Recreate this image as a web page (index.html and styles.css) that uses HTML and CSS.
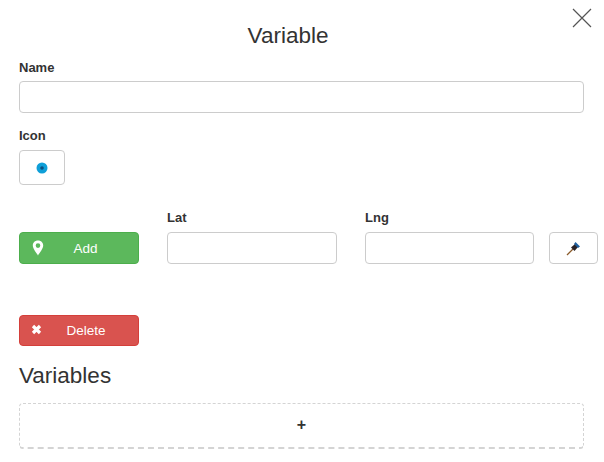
FILE: index.html
```html
<!DOCTYPE html>
<html lang="en">
<head>
    <meta charset="UTF-8">
    <title>Variable</title>
    <link rel="stylesheet" href="styles.css">
</head>
<body>
    <div class="modal">
        <button class="close" aria-label="Close">
            <svg width="20" height="20" viewBox="0 0 20 20"><path d="M1 1L19 19M19 1L1 19" stroke="#555" stroke-width="1.2" fill="none"/></svg>
        </button>
        <h1>Variable</h1>
        <label>Name</label>
        <input type="text" class="input name-input">
        <label class="icon-label">Icon</label>
        <button class="btn icon-btn">
            <svg width="12" height="12" viewBox="0 0 12 12"><circle cx="6" cy="6" r="5.5" fill="#0f9fd8"/><circle cx="6" cy="6" r="1.800" fill="#0b4f80"/></svg>
        </button>
        <div class="coords">
            <button class="btn action add">
                <svg class="action-icon" width="12" height="16" viewBox="0 0 12 16"><path fill-rule="evenodd" d="M6 .5C2.8.5.8 2.8.8 5.6.8 8.8 4.4 12.800 6 15.500 7.600 12.800 11.200 8.800 11.200 5.600 11.200 2.800 9.200.5 6 .5ZM6 3.300A2.300 2.300 0 1 1 6 7.900 2.300 2.300 0 0 1 6 3.300Z" fill="#fff"/></svg>
                <span>Add</span>
            </button>
            <div class="field lat">
                <label>Lat</label>
                <input type="text" class="input">
            </div>
            <div class="field lng">
                <label>Lng</label>
                <input type="text" class="input">
            </div>
            <button class="btn pin-btn">
                <svg width="16" height="16" viewBox="0 0 16 16">
                    <path d="M1 15L7 9" stroke="#8a5a2a" stroke-width="1.200"/>
                    <path d="M5 7.500L9 4L12 7L8.500 11Z" fill="#2b2226"/>
                    <path d="M9.500 2L14 6.500L12 8L8 4Z" fill="#1f5f9e"/>
                </svg>
            </button>
        </div>
        <button class="btn action delete">
            <svg class="action-icon" width="11" height="11" viewBox="0 0 11 11"><path d="M2 2L9 9M9 2L2 9" stroke="#fff" stroke-width="3.200" fill="none"/></svg>
            <span>Delete</span>
        </button>
        <h2>Variables</h2>
        <div class="add-box">+</div>
    </div>
</body>
</html>
```

FILE: styles.css
```css
body {
    font-family: "Liberation Sans", Arial, sans-serif;
    margin: 0;
    padding: 0;
    background-color: #fff;
    color: #333;
    font-size: 13px;
}
.modal {
    position: relative;
    padding: 23px 20px 0 19px;
}
.close {
    position: absolute;
    top: 8px;
    right: 12px;
    padding: 0;
    border: none;
    background: none;
    line-height: 0;
}
h1 {
    margin: 0 0 11px;
    padding-right: 27px;
    font-size: 22.5px;
    font-weight: 400;
    line-height: 26px;
    text-align: center;
}
h2 {
    margin: 16px 0 13px;
    font-size: 22.5px;
    font-weight: 400;
    line-height: 28px;
}
label {
    display: block;
    margin-bottom: 6px;
    font-weight: 700;
    line-height: 15px;
}
.input {
    display: block;
    box-sizing: border-box;
    width: 100%;
    height: 32px;
    padding: 6px 12px;
    border: 1px solid #ccc;
    border-radius: 4px;
    background-color: #fff;
}
.name-input {
    margin-bottom: 15px;
}
.icon-label {
    margin-bottom: 7px;
}
.btn {
    display: flex;
    flex: none;
    align-items: center;
    justify-content: center;
    box-sizing: border-box;
    padding: 0;
    border: 1px solid #ccc;
    border-radius: 4px;
    background-color: #fff;
    font-family: inherit;
    font-size: 13.5px;
}
.icon-btn {
    width: 46px;
    height: 35px;
}
.coords {
    display: flex;
    align-items: flex-end;
    margin-top: 25px;
    margin-right: -14px;
}
.action {
    position: relative;
    width: 120px;
    height: 32px;
    color: #fff;
}
.action-icon {
    position: absolute;
    left: 12px;
    top: 7px;
}
.add {
    background-color: #5cb85c;
    border-color: #4cae4c;
}
.add span {
    margin-left: 13px;
}
.delete {
    margin-top: 51px;
    background-color: #d9534f;
    border-color: #d43f3a;
    height: 31px;
}
.delete span {
    margin-left: 14px;
}
.delete .action-icon {
    top: 8px;
    left: 11px;
}
.field {
    flex: none;
}
.field label {
    margin-bottom: 7px;
}
.lat {
    width: 170px;
    margin-left: 28px;
}
.lng {
    width: 169px;
    margin-left: 28px;
}
.pin-btn {
    width: 49px;
    height: 32px;
    margin-left: 15px;
}
.add-box {
    box-sizing: border-box;
    height: 46px;
    border: 1px dashed #d4d4d4;
    border-bottom-width: 2px;
    border-radius: 4px;
    font-size: 16px;
    font-weight: 700;
    line-height: 42px;
    text-align: center;
}
```
